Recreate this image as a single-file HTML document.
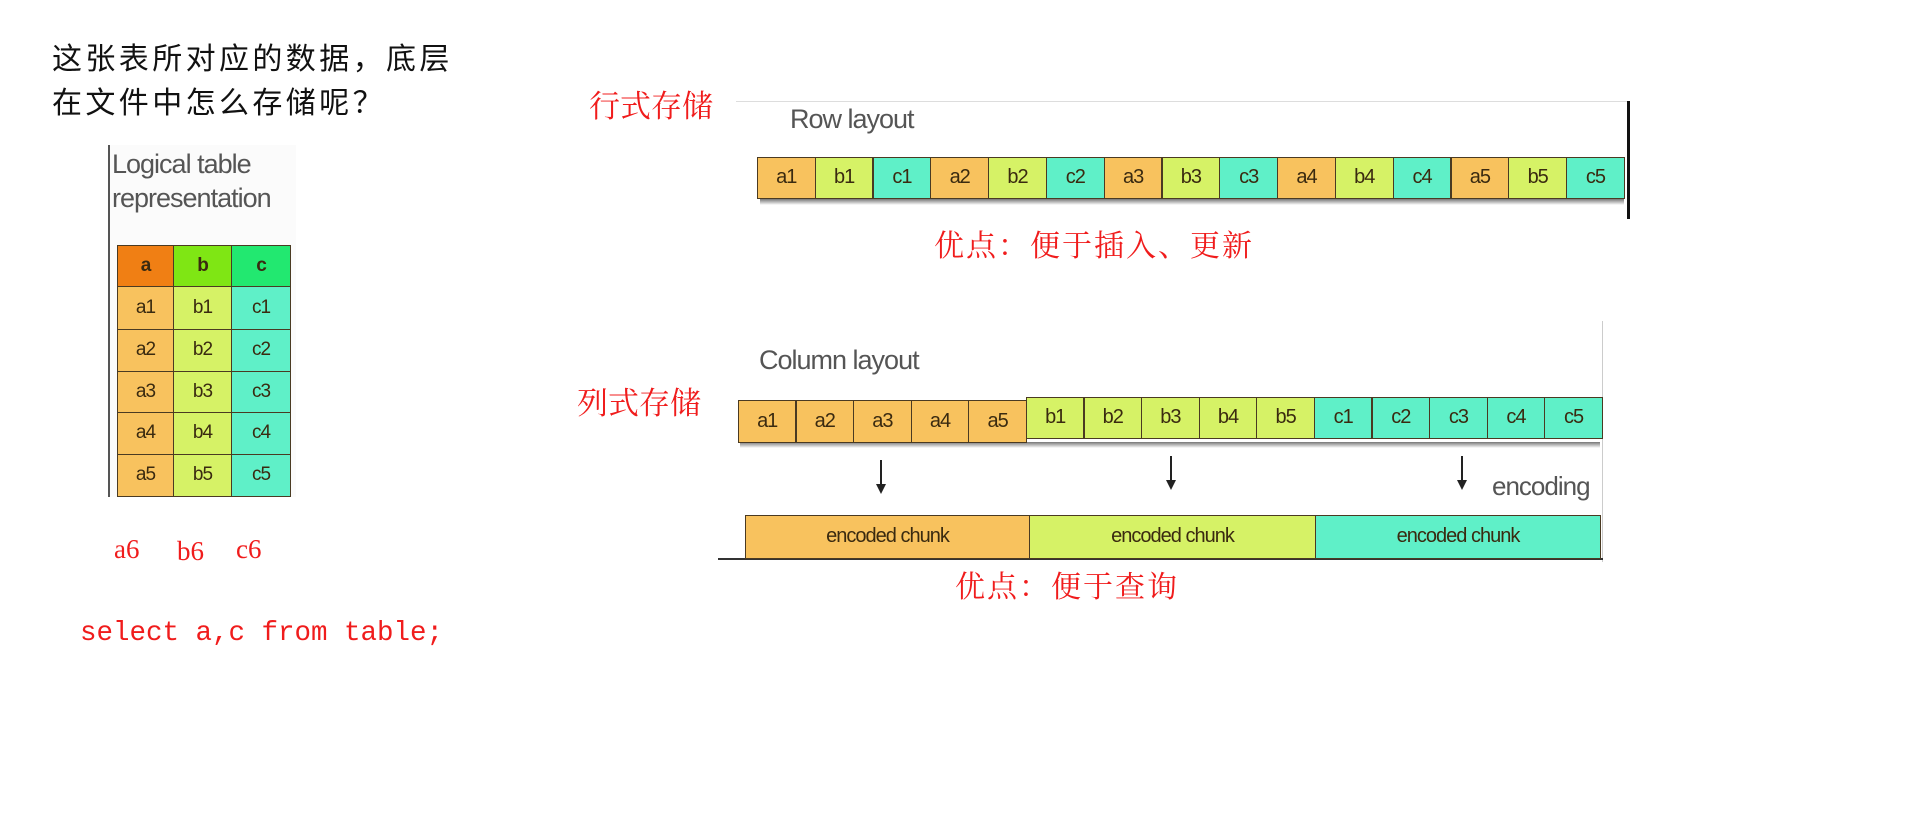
<!DOCTYPE html>
<html><head><meta charset="utf-8"><style>
html,body{margin:0;padding:0;background:#fff;width:1914px;height:815px;overflow:hidden;position:relative;font-family:"Liberation Sans","Noto Sans CJK SC",sans-serif}
.a{position:absolute}
.q{left:52px;font-family:"Liberation Serif","Noto Sans CJK SC",sans-serif;font-size:30px;letter-spacing:3.4px;color:#111;line-height:1;white-space:nowrap}
.red{color:#f01c1c;font-family:"Liberation Serif","Noto Serif CJK SC",serif;line-height:1;white-space:nowrap}
.cell{position:absolute;box-sizing:border-box;border:1.5px solid #4a3a22;text-align:center;color:#3a2a10;font-size:20px;letter-spacing:-1px}
.o{background:#f8c25e}.g{background:#d6f266}.t{background:#5ff0c8}
.shadow{position:absolute;height:6px;background:linear-gradient(#777,#fff0)}
</style></head><body>
<div class="a q" style="top:45px">这张表所对应的数据，底层</div>
<div class="a q" style="top:89px">在文件中怎么存储呢？</div>

<div class="a" style="left:108px;top:145px;width:186px;height:352px;background:#fbfbfb;border-left:2px solid #555"></div>
<div class="a" style="left:112px;top:147px;font-size:27px;color:#555;letter-spacing:-1px;line-height:34px">Logical table<br>representation</div>

<div class="a red" style="left:114px;top:536px;font-size:27px">a6</div>
<div class="a red" style="left:177px;top:538px;font-size:27px">b6</div>
<div class="a red" style="left:236px;top:536px;font-size:27px">c6</div>
<div class="a red" style="left:80px;top:620px;font-size:27.5px;font-family:'Liberation Mono',monospace">select a,c from table;</div>

<div class="a red" style="left:589px;top:91px;font-size:31px">行式存储</div>
<div class="a" style="left:736px;top:101px;width:891px;height:1px;background:#ddd"></div>
<div class="a" style="left:1627px;top:101px;width:3px;height:118px;background:#111"></div>
<div class="a" style="left:790px;top:104px;font-size:27px;color:#555;letter-spacing:-1px">Row layout</div>
<div class="a red" style="left:934px;top:232px;font-size:30px;letter-spacing:2px">优点：便于插入、更新</div>

<div class="a red" style="left:577px;top:388px;font-size:31px">列式存储</div>
<div class="a" style="left:1602px;top:321px;width:1px;height:241px;background:#ccc"></div>
<div class="a" style="left:718px;top:558px;width:885px;height:2px;background:#333"></div>
<div class="a" style="left:759px;top:345px;font-size:27px;color:#555;letter-spacing:-1px">Column layout</div>
<div class="a" style="left:1492px;top:471px;font-size:26px;color:#555;letter-spacing:-1px">encoding</div>
<div class="a red" style="left:955px;top:573px;font-size:30px;letter-spacing:2px">优点：便于查询</div>

<script>
function c(p,x,y,w,h,cls,txt,fs){var d=document.createElement('div');d.className='cell '+cls;d.style.cssText='left:'+x+'px;top:'+y+'px;width:'+w+'px;height:'+h+'px;line-height:'+(h-3)+'px;'+(fs?'font-size:'+fs+'px;':'');d.textContent=txt;document.body.appendChild(d);}
var cols=[117,173,231,290],rows=[245,286,329,371,412,454,496];
var hc=['#f07f14','#7fe614','#22e870'],cc=['o','g','t'],L=['a','b','c'];
var hs=[];
for(var j=0;j<3;j++){for(var i=0;i<6;i++){var t=i==0?L[j]:L[j]+i;c(0,cols[j],rows[i],cols[j+1]-cols[j]+1,rows[i+1]-rows[i]+1,cc[j],t,19);if(i==0)hs.push(document.body.lastChild);}}
for(var j=0;j<3;j++){hs[j].style.background=hc[j];hs[j].style.fontWeight='bold';}
var s=document.createElement('div');s.className='shadow';s.style.cssText+='left:760px;top:199px;width:864px';document.body.appendChild(s);
for(var k=0;k<15;k++){var r=Math.floor(k/3)+1,q=k%3;c(0,757+k*57.8,157,58.6,42,cc[q],L[q]+r);}
s=document.createElement('div');s.className='shadow';s.style.cssText+='left:740px;top:442px;width:860px';document.body.appendChild(s);
for(var k=0;k<15;k++){var q=Math.floor(k/5),r=k%5+1;var y=q==0?400:397;c(0,738+k*57.6,y,58.4,q==0?43:42,cc[q],L[q]+r);}
[881,1171,1462].forEach(function(x,i){var d=document.createElement('div');d.className='a';d.style.cssText='left:'+(x-6)+'px;top:'+(i==0?460:456)+'px;';d.innerHTML='<svg width="12" height="36"><line x1="6" y1="0" x2="6" y2="28" stroke="#222" stroke-width="2"/><path d="M1 24 L6 34 L11 24Z" fill="#222"/></svg>';document.body.appendChild(d);});
c(0,745,515,285,44,'o','encoded chunk',20);c(0,1029,515,287,44,'g','encoded chunk',20);c(0,1315,515,286,44,'t','encoded chunk',20);
</script>
</body></html>
